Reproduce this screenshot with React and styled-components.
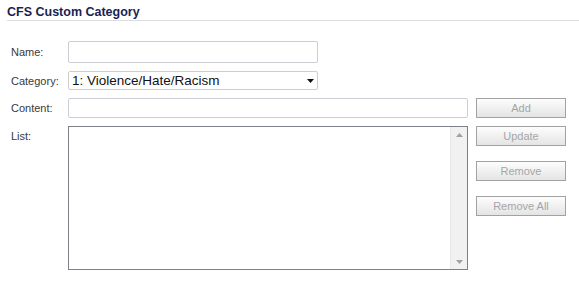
import React from "react";
import styled, { createGlobalStyle } from "styled-components";

/* Estilos globais da página */

const GlobalStyle = createGlobalStyle`
  html, body {
    margin: 0;
    padding: 0;
    background: #ffffff;
  }
  body {
    font-family: "Liberation Sans", Arial, sans-serif;
    font-size: 11px;
    color: #333333;
  }
`;

const SPanel = styled.div`
  width: 579px;
  height: 281px;
  box-sizing: border-box;
`;

const STitle = styled.h1`
  margin: 0 0 0 7px;
  padding-top: 4px;
  height: 16px;
  line-height: 16px;
  font-size: 12.5px;
  font-weight: bold;
  color: #1a1f56;
  border-bottom: 1px solid #dcdde1;
`;

const SForm = styled.div`
  margin-top: 20px;
  padding-left: 11px;
  display: grid;
  grid-template-columns: 49px 400px 90px;
  grid-template-rows: 22px 19px 20px 144px;
  column-gap: 8px;
  row-gap: 8px;
`;

const SLabel = styled.label`
  grid-column: 1;
  display: flex;
  align-items: ${(p) => (p.$top ? "flex-start" : "center")};
  padding-top: ${(p) => (p.$top ? "3px" : "0")};
  color: #3a3a3a;
  line-height: 14px;
  white-space: nowrap;
`;

const SInput = styled.div`
  grid-column: 2;
  width: ${(p) => p.$width}px;
  box-sizing: border-box;
  border: 1px solid #cdcdd3;
  border-radius: 2px;
  background: #ffffff;
`;

const SSelect = styled.div`
  grid-column: 2;
  width: 250px;
  box-sizing: border-box;
  border: 1px solid #cdcdd3;
  border-radius: 2px;
  background: #ffffff;
  display: flex;
  align-items: center;
  justify-content: space-between;
  padding: 0 2px 0 3px;
  font-size: 13.5px;
  color: #111111;

  svg {
    margin-right: 1px;
  }
`;

const SList = styled.div`
  grid-column: 2;
  box-sizing: border-box;
  border: 1px solid #7d8188;
  background: #ffffff;
  display: flex;
  justify-content: flex-end;
`;

const SScroll = styled.div`
  width: 16px;
  background: #f1f1f1;
  border-left: 1px solid #e9e9e9;
  display: flex;
  flex-direction: column;
  justify-content: space-between;
  align-items: center;
  padding: 6px 0 5px;
`;

const SButtons = styled.div`
  grid-column: 3;
  display: flex;
  flex-direction: column;
  gap: 15px;
`;

const SButton = styled.button`
  grid-column: 3;
  width: 90px;
  height: 20px;
  box-sizing: border-box;
  padding: 0;
  border: 1px solid #a2a2a2;
  border-radius: 0;
  background: linear-gradient(#fdfdfd, #e4e4e4);
  color: #a6a6a6;
  font-family: "Liberation Sans", Arial, sans-serif;
  font-size: 11px;
`;

function Arrow({ up, color }) {
  return (
    <svg width="7" height="4" viewBox="0 0 7 4">
      <path d={up ? "M3.5 0 L7 4 L0 4 Z" : "M0 0 L7 0 L3.5 4 Z"} fill={color} />
    </svg>
  );
}

export default function App() {
  return (
    <>
      <GlobalStyle />
      <SPanel>
        <STitle>CFS Custom Category</STitle>
        <SForm>
          <SLabel>Name:</SLabel>
          <SInput $width={250} />

          <SLabel>Category:</SLabel>
          <SSelect>
            <span>1: Violence/Hate/Racism</span>
            <Arrow color="#111111" />
          </SSelect>

          <SLabel>Content:</SLabel>
          <SInput $width={400} />
          <SButton disabled>Add</SButton>

          <SLabel $top>List:</SLabel>
          <SList>
            <SScroll>
              <Arrow up color="#a0a0a0" />
              <Arrow color="#a0a0a0" />
            </SScroll>
          </SList>
          <SButtons>
            <SButton disabled>Update</SButton>
            <SButton disabled>Remove</SButton>
            <SButton disabled>Remove All</SButton>
          </SButtons>
        </SForm>
      </SPanel>
    </>
  );
}
